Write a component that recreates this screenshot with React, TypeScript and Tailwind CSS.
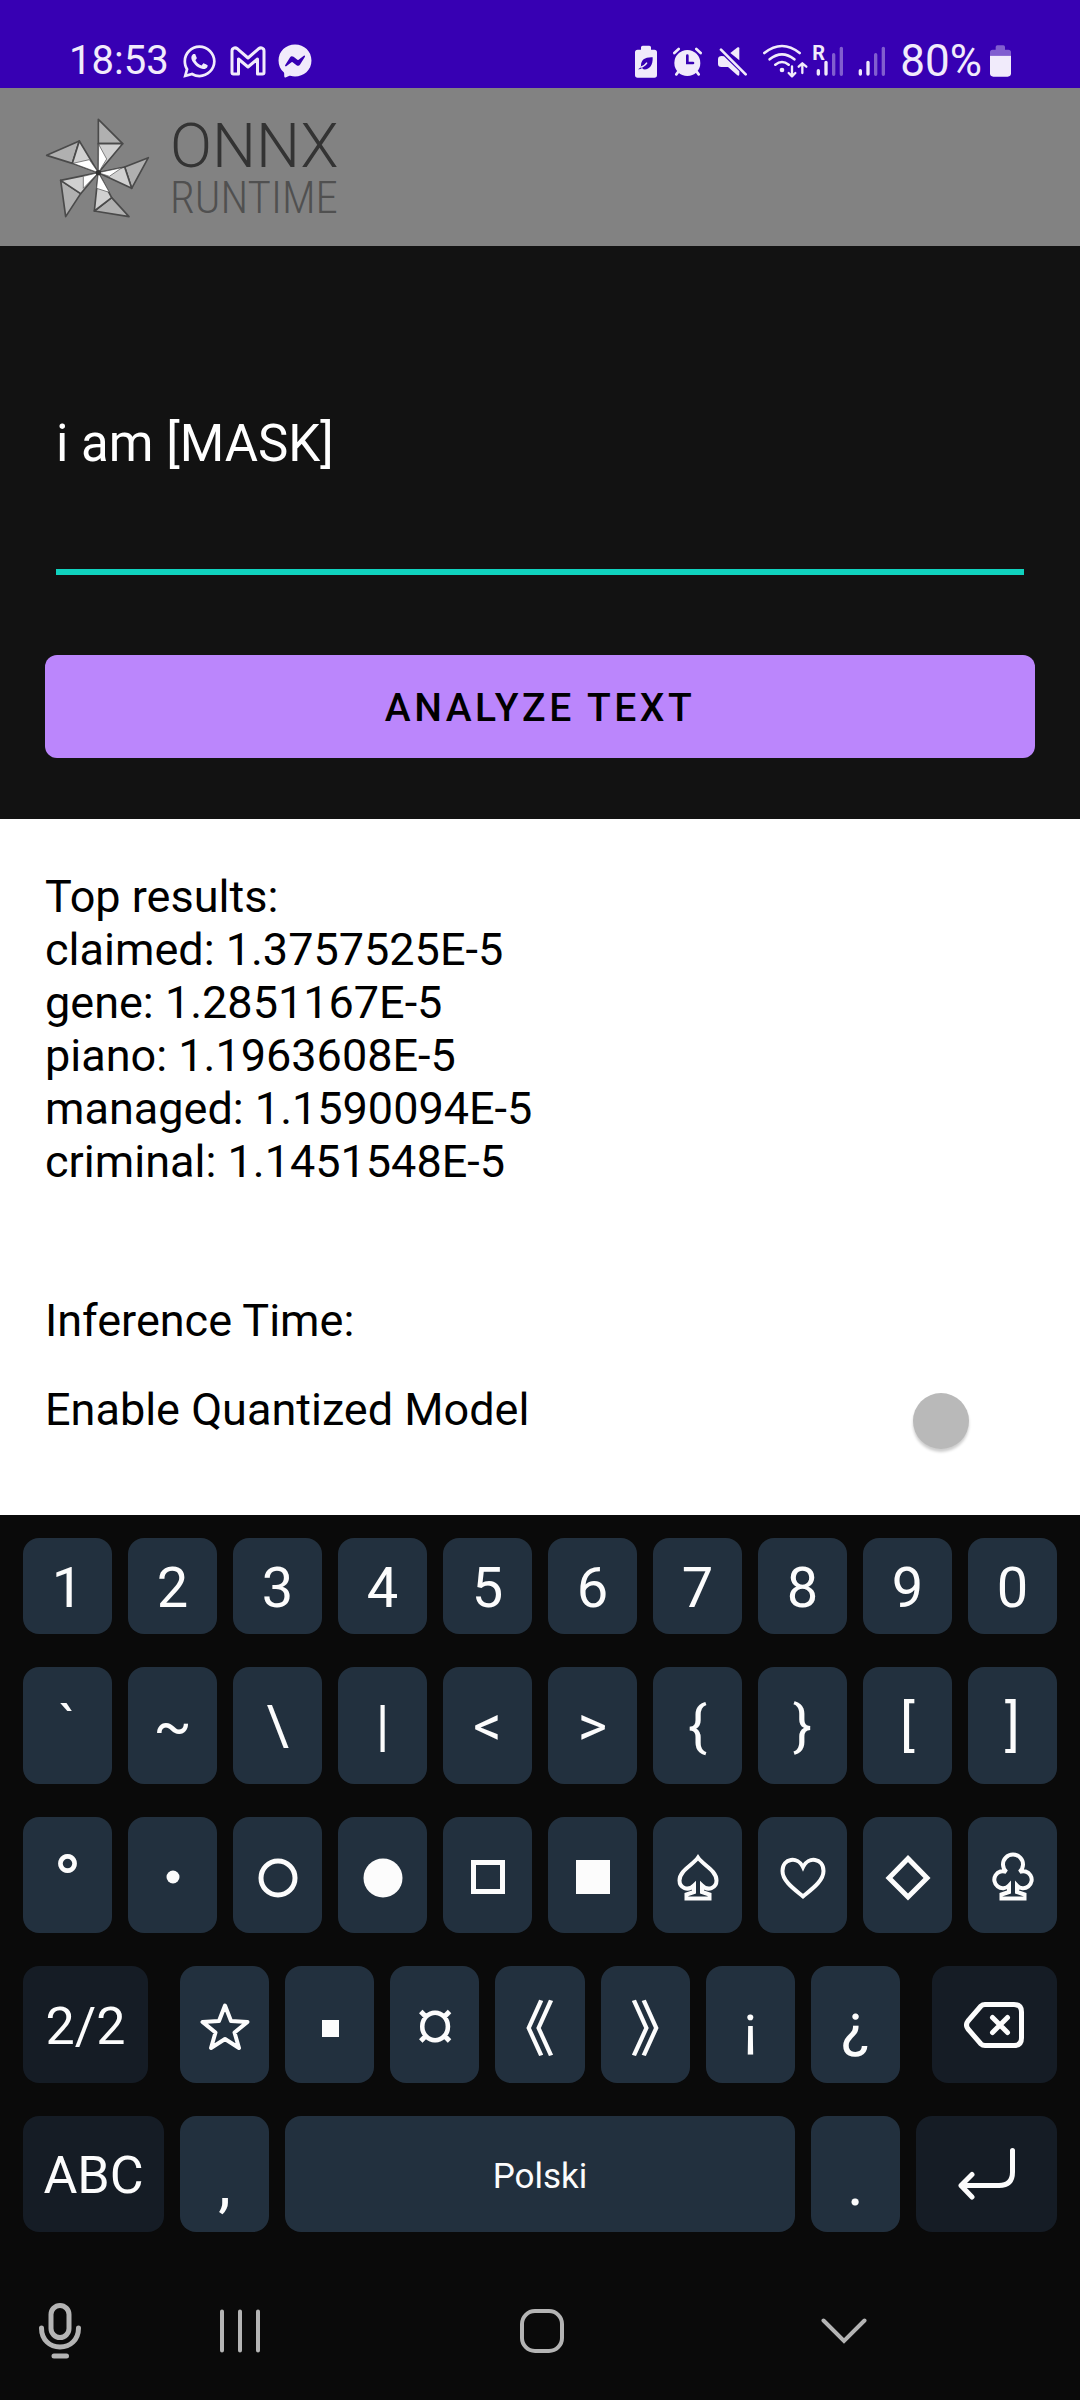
import { useState, type ReactNode } from "react";
import { FaFacebookMessenger, FaWhatsapp } from "react-icons/fa6";

const results = [
  { word: "claimed", score: "1.3757525E-5" },
  { word: "gene", score: "1.2851167E-5" },
  { word: "piano", score: "1.1963608E-5" },
  { word: "managed", score: "1.1590094E-5" },
  { word: "criminal", score: "1.1451548E-5" },
];

function GmailIcon() {
  return (
    <svg width="36" height="30" viewBox="0 0 36 30" fill="none" stroke="currentColor" strokeWidth="3" strokeLinejoin="round">
      <path d="M2 26.5V5C2 2 5 1 7.500 2.800L18 12L28.500 2.800C31 1 34 2 34 5V26.500C34 27.500 33.500 28 32.500 28H27.500V13L18 21L8.500 13V28H3.500C2.500 28 2 27.500 2 26.500Z" />
    </svg>
  );
}

function PowerSavingIcon() {
  return (
    <svg width="22" height="35" viewBox="102 130 66 105">
      <path fill="currentColor" d="M120 140q0-5 5-5h20q5 0 5 5v7h10q8 0 8 8v68q0 8-8 8h-50q-8 0-8-8v-68q0-8 8-8h10z" />
      <path fill="#3700b3" d="M155 170c1 26-10 38-28 36l-4-4c-4 3-7 4-12 4 6-4 8-6 9-11 0-18 12-26 35-25z" />
      <path d="M118 200q12-2 20-14" stroke="currentColor" strokeWidth="4" fill="none" />
    </svg>
  );
}

function AlarmIcon() {
  return (
    <svg width="29" height="35" viewBox="219 130 87 105" fill="none" stroke="currentColor" strokeLinecap="round">
      <circle cx="262" cy="187" r="39" fill="currentColor" stroke="none" />
      <path strokeWidth="8" d="M223 157L236 145M302 157L289 145M235 213L229 221M290 213L296 221" />
      <path d="M262 165V187H279" stroke="#3700b3" strokeWidth="8" />
    </svg>
  );
}

function MuteIcon() {
  return (
    <svg width="29" height="35" viewBox="354 130 87 105" fill="currentColor">
      <path d="M391 157L413 140Q418 138 418 143V179Z" />
      <path d="M357 168Q363 164 372 167L418 212V221Q418 227 412 224L384 199H364Q354 199 354 190V176Q354 170 357 168Z" />
      <path d="M363 147L437 221" stroke="currentColor" strokeWidth="8" strokeLinecap="round" />
    </svg>
  );
}

function WifiIcon() {
  return (
    <svg width="45" height="35" viewBox="485 130 135 105" fill="none" stroke="currentColor" strokeWidth="8" strokeLinecap="round">
      <path d="M489 157Q542 115 595 157M505 176Q542 146 579 176M522 192Q542 176 562 192" />
      <circle cx="542" cy="208" r="7" fill="currentColor" stroke="none" />
      <path strokeWidth="7" strokeLinejoin="round" d="M572 197V226M562 217L572 227L582 217M603 217V189M592 198L603 188L615 198" />
    </svg>
  );
}

function SignalIcon({ roaming = false }: { roaming?: boolean }) {
  return (
    <span className="relative flex">
      {roaming && <span className="absolute -left-1 -top-px text-[20px] leading-[20px] font-bold">R</span>}
      <svg width="28" height="35" viewBox="773 130 84 105" stroke="currentColor" strokeWidth="10" strokeLinecap="round">
        <path d="M780 210V220M803 185V220" />
        <path opacity=".4" d="M826 162V221M849 143V221" />
      </svg>
    </span>
  );
}

function BatteryIcon() {
  return (
    <svg width="21" height="35" viewBox="1170 130 63 105" fill="currentColor">
      <path opacity=".4" d="M1170 165V155Q1170 147 1178 147H1187V139Q1187 134 1192 134H1210Q1215 134 1215 139V147H1225Q1233 147 1233 155V165Z" />
      <path d="M1170 165H1233V218Q1233 228 1223 228H1180Q1170 228 1170 218Z" />
    </svg>
  );
}

function StatusBar() {
  return (
    <div className="flex h-[88px] items-center justify-between bg-[#3700b3] pt-[34px] pr-[69px] pl-[69px] text-[#f1ebfb]">
      <div className="flex items-center">
        <span className="text-[40px] leading-[40px]">18:53</span>
        <div className="ml-3 flex items-center gap-3">
          <FaWhatsapp size={37} />
          <GmailIcon />
          <FaFacebookMessenger size={34} />
        </div>
      </div>
      <div className="flex items-center gap-[14px]">
        <div className="flex items-center gap-2">
          <div className="flex items-center gap-4">
            <PowerSavingIcon />
            <AlarmIcon />
            <MuteIcon />
            <WifiIcon />
          </div>
          <SignalIcon roaming />
        </div>
        <SignalIcon />
        <span className="flex items-center gap-2">
          <span className="text-[44px] leading-[40px]">80%</span>
          <BatteryIcon />
        </span>
      </div>
    </div>
  );
}

function PinwheelLogo() {
  return (
    <svg width="105" height="101" viewBox="45 48 315 303" stroke="#4a4a4a" strokeWidth="5" strokeLinejoin="round">
      <g fill="#b0b0b0">
        <path d="M205 55L278 128H205Z" />
        <path d="M50 163L148 120L127 187Z" />
        <path d="M355 170L305 262L284 198Z" />
        <path d="M107 347L92 238L152 278Z" />
        <path d="M297 347L193 330L245 290Z" />
      </g>
      <g fill="#d0d0d0">
        <path d="M205 128H278L205 215Z" />
        <path d="M148 120L127 187L205 215Z" />
        <path d="M284 198L305 262L205 215Z" />
        <path d="M92 238L205 215L152 278Z" />
        <path d="M193 330L205 215L245 290Z" />
      </g>
      <g fill="#fff" strokeWidth="2">
        <path d="M205 215L206 130L230 174Z" />
        <path d="M205 215L129 187L178 176Z" />
        <path d="M205 215L276 200L238 226Z" />
        <path d="M205 215L160 226V262Z" />
        <path d="M205 215L200 262L238 274Z" />
      </g>
      <circle cx="205" cy="215" r="8" fill="#333" stroke="none" />
    </svg>
  );
}

function Header() {
  return (
    <header className="flex h-[158px] items-center bg-[#828282] pt-[1px] pl-[45px]">
      <PinwheelLogo />
      <div className="ml-5 flex flex-col text-[#333333]">
        <span className="text-[62px] leading-[60px] font-light">ONNX</span>
        <span className="font-['Roboto_Condensed','Liberation_Sans_Narrow',Roboto,sans-serif] text-[45px] leading-[44px] font-light text-[#505050]">
          RUNTIME
        </span>
      </div>
    </header>
  );
}

function KeyIcon({ children, solid = false }: { children: ReactNode; solid?: boolean }) {
  return (
    <svg width="54" height="54" viewBox="0 0 54 54" fill={solid ? "currentColor" : "none"} stroke={solid ? "none" : "currentColor"} strokeWidth="5">
      {children}
    </svg>
  );
}

function Key({ label, children, className = "flex-[89] bg-[#22303e] text-[56px]" }: { label: string; children?: ReactNode; className?: string }) {
  return (
    <button
      type="button"
      aria-label={label}
      className={`flex h-full min-w-0 basis-0 items-center justify-center rounded-2xl leading-none text-[#fcfcfc] ${className}`}
    >
      {children ?? label}
    </button>
  );
}

const digits = ["1", "2", "3", "4", "5", "6", "7", "8", "9", "0"];
const brackets = ["`", "~", "\\", "|", "<", ">", "{", "}", "[", "]"];

function Keyboard() {
  return (
    <div className="flex flex-col gap-[33px] px-[23px] pt-[23px]">
      <div className="flex h-[96px] gap-4">
        {digits.map((d) => (
          <Key key={d} label={d} className="flex-[89] bg-[#22303e] pt-1 text-[56px]" />
        ))}
      </div>
      <div className="flex h-[117px] gap-4">
        {brackets.map((b) => (
          <Key key={b} label={b} />
        ))}
      </div>
      <div className="flex h-[116px] gap-4">
        <Key label="°" className="flex-[89] bg-[#22303e] pt-4 text-[76px]" />
        <Key label="Bullet">
          <KeyIcon solid><circle cx="27" cy="29" r="6.500" /></KeyIcon>
        </Key>
        <Key label="White circle">
          <KeyIcon><circle cx="27" cy="30" r="17" /></KeyIcon>
        </Key>
        <Key label="Black circle">
          <KeyIcon solid><circle cx="27" cy="30" r="19.500" /></KeyIcon>
        </Key>
        <Key label="White square">
          <KeyIcon><path d="M12.500 14.500H41.500V43.500H12.500Z" /></KeyIcon>
        </Key>
        <Key label="Black square">
          <KeyIcon solid><path d="M10 12H44V46H10Z" /></KeyIcon>
        </Key>
        <Key label="Spade">
          <KeyIcon>
            <path strokeWidth="4" d="M27 9.500C22 17 8.500 22.500 8.500 32.500C8.500 40 17 43.500 23 37.500V44L15.500 46.500V50.500H38.500V46.500L31 44V37.500C37 43.500 45.500 40 45.500 32.500C45.500 22.500 32 17 27 9.500Z" />
          </KeyIcon>
        </Key>
        <Key label="Heart">
          <KeyIcon>
            <path strokeWidth="4" d="M27 48.500C18 41 6.500 33 6.500 23C6.500 10 22 8 27 19C32 8 47.500 10 47.500 23C47.500 33 36 41 27 48.500Z" />
          </KeyIcon>
        </Key>
        <Key label="Diamond">
          <KeyIcon><path d="M27 10.500L46 30L27 49L8 30Z" /></KeyIcon>
        </Key>
        <Key label="Club">
          <KeyIcon>
            <path strokeWidth="4" d="M20.500 24A10 10 0 1 1 33.500 24A8.500 8.500 0 1 1 31 37.500V44L38.500 46.500V50.500H15.500V46.500L23 44V37.500A8.500 8.500 0 1 1 20.500 24Z" />
          </KeyIcon>
        </Key>
      </div>
      <div className="flex h-[117px] gap-8">
        <Key label="2/2" className="flex-[125] bg-[#151c25] pt-1 text-[52px]" />
        <div className="flex flex-[719] basis-0 gap-4">
          <Key label="Star">
            <KeyIcon>
              <path strokeWidth="4" strokeLinejoin="round" d="M27 7.500L33 22.900L49.500 23.900L36.500 34.500L41 50L27 41L13 50L17.500 34.500L4.500 23.900L21 22.900Z" />
            </KeyIcon>
          </Key>
          <Key label="Small square">
            <KeyIcon solid><path d="M19 22H36V39H19Z" /></KeyIcon>
          </Key>
          <Key label="¤" className="flex-[89] bg-[#22303e] text-[52px] font-medium" />
          <Key label="《" className="flex-[89] bg-[#22303e] font-['Noto_Sans_CJK_SC',sans-serif] text-[60px] font-medium [font-feature-settings:'halt']" />
          <Key label="》" className="flex-[89] bg-[#22303e] font-['Noto_Sans_CJK_SC',sans-serif] text-[60px] font-medium [font-feature-settings:'halt']" />
          <Key label="¡" />
          <Key label="¿" className="flex-[89] bg-[#22303e] text-[60px]" />
        </div>
        <Key label="Backspace" className="flex-[125] bg-[#151c25]">
          <svg width="60" height="46" viewBox="0 0 60 46" fill="none" stroke="currentColor" strokeWidth="5" strokeLinecap="round" strokeLinejoin="round">
            <path d="M21 2.500H50Q57.500 2.500 57.500 10V36Q57.500 43.500 50 43.500H21Q18.500 43.500 17 42L4 27Q1 23 4 19L17 4Q18.500 2.500 21 2.500Z" />
            <path d="M28.500 15.500L43.500 30.500M43.500 15.500L28.500 30.500" />
          </svg>
        </Key>
      </div>
      <div className="flex h-[116px] gap-4">
        <Key label="ABC" className="flex-[141] bg-[#151c25] pt-1 text-[52px]" />
        <Key label="," className="flex-[89] bg-[#22303e] pt-5 text-[64px]" />
        <Key label="Polski" className="flex-[510] bg-[#22303e] pt-1 text-[35px]" />
        <Key label="." className="flex-[89] bg-[#22303e] pt-5 text-[64px]" />
        <Key label="Enter" className="flex-[141] bg-[#151c25]">
          <svg width="58" height="52" viewBox="0 0 58 52" fill="none" stroke="currentColor" strokeWidth="5" strokeLinecap="round" strokeLinejoin="round">
            <path d="M54.500 2.500V24Q54.500 37.500 41 37.500H3M14 26.500L3 37.500L14 49" />
          </svg>
        </Key>
      </div>
    </div>
  );
}

function NavigationBar() {
  return (
    <nav className="grid h-[168px] grid-cols-[89px_1fr_1fr_1fr_85px] items-center pt-[30px] text-[#b4b4b4]">
      <button type="button" aria-label="Voice input" className="flex justify-center pl-[30px]">
        <svg width="42" height="56" viewBox="0 0 42 56" fill="none" stroke="currentColor" strokeWidth="5" strokeLinecap="round">
          <rect x="12" y="2.500" width="18" height="32" rx="9" />
          <path d="M2.500 25C2.500 37 11 44 21 44S39.500 37 39.500 25M15 53H27.500" />
        </svg>
      </button>
      <button type="button" aria-label="Recent apps" className="flex justify-center">
        <svg width="40" height="44" viewBox="0 0 40 44" stroke="currentColor" strokeWidth="4" strokeLinecap="round">
          <path d="M2 2.500V41.500M20 2.500V41.500M38 2.500V41.500" />
        </svg>
      </button>
      <button type="button" aria-label="Home" className="flex justify-center">
        <svg width="44" height="44" viewBox="0 0 44 44" fill="none" stroke="currentColor" strokeWidth="4">
          <rect x="2" y="2" width="40" height="40" rx="13" />
        </svg>
      </button>
      <button type="button" aria-label="Hide keyboard" className="flex justify-center">
        <svg width="46" height="26" viewBox="0 0 46 26" fill="none" stroke="currentColor" strokeWidth="4" strokeLinecap="round">
          <path d="M2.500 2.500L23 23L43.500 2.500" />
        </svg>
      </button>
    </nav>
  );
}

export default function App() {
  const [text, setText] = useState("i am [MASK]");
  const [quantized, setQuantized] = useState(false);

  return (
    <div className="min-h-screen bg-[#0a0a0a] font-[Roboto,sans-serif]">
      <StatusBar />
      <Header />
      <section className="flex flex-col bg-[#121212] px-[45px] pt-[168px] pb-[61px]">
        <div className="flex px-[11px]">
          <input
            type="text"
            aria-label="Text to analyze"
            value={text}
            onChange={(e) => setText(e.target.value)}
            className="w-full min-w-0 border-b-[6px] border-[#10d2be] bg-transparent pb-[95px] text-[51px] leading-[60px] text-white outline-none"
          />
        </div>
        <button type="button" className="mt-20 h-[103px] rounded-xl bg-[#bb86fc] pt-1 text-[39px] font-medium tracking-[0.09em] text-black">
          ANALYZE TEXT
        </button>
      </section>
      <section className="bg-white px-[45px] pt-[51px] pb-[66px] text-[45px] leading-[53px] text-black">
        <p>Top results:</p>
        <ul>
          {results.map((r) => (
            <li key={r.word}>
              {r.word}: {r.score}
            </li>
          ))}
        </ul>
        <p className="mt-[106px]">Inference Time:</p>
        <div className="mt-9 flex items-start justify-between">
          <label htmlFor="quantized">Enable Quantized Model</label>
          <input
            id="quantized"
            type="checkbox"
            role="switch"
            checked={quantized}
            onChange={(e) => setQuantized(e.target.checked)}
            className="mt-[10px] flex h-14 w-[122px] appearance-none before:size-14 before:rounded-full before:bg-[#b9b9b9] before:shadow-[0_3px_3px_rgba(0,0,0,0.2)] before:content-[''] checked:justify-end"
          />
        </div>
      </section>
      <Keyboard />
      <NavigationBar />
    </div>
  );
}
